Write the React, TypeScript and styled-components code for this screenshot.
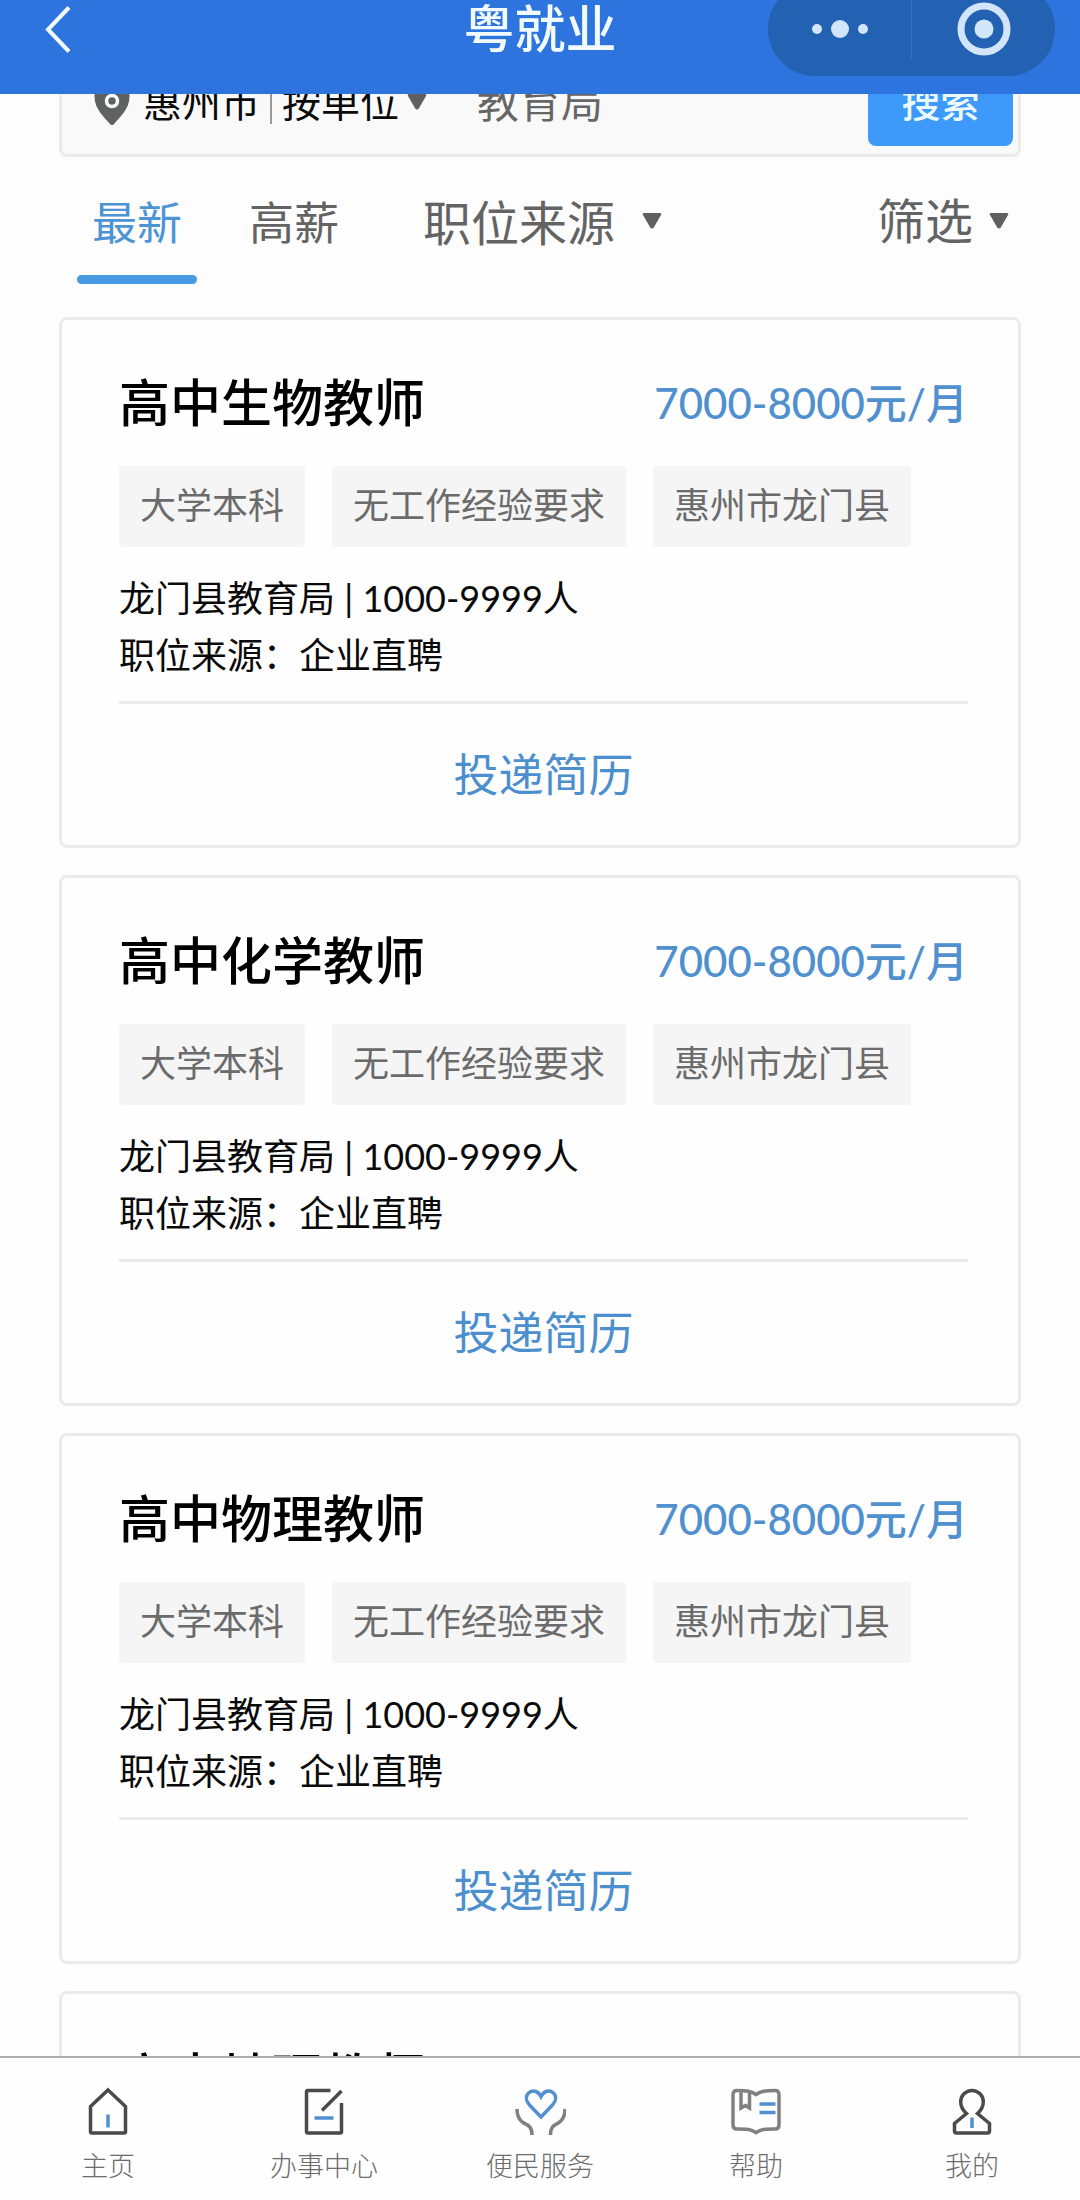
import React, { useLayoutEffect, useRef, useState } from "react";
import styled, { createGlobalStyle } from "styled-components";

const GlobalStyle = createGlobalStyle`
  * { box-sizing: border-box; }
  body {
    margin: 0;
    background: #fdfdfd;
    font-family: Lato, "Noto Sans CJK SC", sans-serif;
    color: #0a0a0a;
  }
  button, input, select {
    font: inherit;
    color: inherit;
    margin: 0;
    padding: 0;
    border: 0;
    background: none;
    appearance: none;
    outline: none;
  }
  button { cursor: pointer; }
  h1, h2, p, ul { margin: 0; padding: 0; }
  ul { list-style: none; }
`;

const Screen = styled.div`
  display: flex;
  flex-direction: column;
  height: 100vh;
  overflow: hidden;
`;

const Header = styled.header`
  flex: none;
  overflow: hidden;
  padding-bottom: 18px;
  background: #2d74de;
`;

const HeaderBar = styled.div`
  display: grid;
  grid-template-columns: 1fr auto 1fr;
  align-items: center;
  height: 94px;
  margin-top: -18px;
  padding: 0 25px 0 40px;
  color: #f2fbff;
`;

const BackButton = styled.button`
  justify-self: start;
  display: flex;
`;

const AppTitle = styled.h1`
  padding-right: 15px;
  font-size: 51px;
  line-height: 60px;
  font-weight: 500;
`;

const Capsule = styled.div`
  justify-self: end;
  display: flex;
  align-items: center;
  width: 287px;
  height: 94px;
  border-radius: 47px;
  background: #2361b3;
  color: #d3e5fb;
`;

const CapsuleButton = styled.button`
  flex: 1;
  display: flex;
  justify-content: center;
  & + & { border-left: 1px solid #3270c3; }
  height: 62px;
  align-items: center;
`;

const Scroller = styled.main`
  flex: 1;
  min-height: 0;
  overflow-y: auto;
  scrollbar-width: none;
  padding: 24px 59px 27px;
`;

const SearchBar = styled.form`
  display: flex;
  align-items: center;
  height: 110px;
  padding: 0 5px 0 32px;
  border: 3px solid #ebebeb;
  border-radius: 8px;
  background: #f9f9f9;
  font-size: 39px;
  line-height: 46px;
`;

const CityButton = styled.button`
  display: flex;
  align-items: center;
  gap: 13px;
`;

const Divider = styled.span`
  width: 2px;
  height: 44px;
  margin: 0 10px;
  background: #999;
`;

const SelectWrap = styled.label<{ $gap: number }>`
  display: flex;
  align-items: center;
  gap: ${(p) => p.$gap}px;
`;

const Keyword = styled.input`
  flex: 1;
  min-width: 0;
  padding-left: 50px;
  color: #666;
  font-size: 42px;
`;

const SearchButton = styled.button`
  width: 145px;
  height: 87px;
  border-radius: 8px;
  background: #3d9afb;
  color: #ecfaff;
  font-weight: 500;
`;

const Filters = styled.nav`
  display: flex;
  align-items: flex-start;
  margin: 21px 0 33px;
  padding: 0 12px 0 18px;
  color: #636363;
  font-size: 48px;
  line-height: 90px;
`;

const Tab = styled.button<{ $active: boolean }>`
  margin-right: 37px;
  padding: 0 15px;
  font-size: 45px;
  line-height: 90px;
  color: ${(p) => (p.$active ? "#4c94d4" : "#636363")};
  &::after {
    content: "";
    display: block;
    height: 9px;
    margin: 7px -15px 0;
    border-radius: 5px;
    background: ${(p) => (p.$active ? "#4699e3" : "transparent")};
  }
`;

const SourceFilter = styled(SelectWrap)`
  height: 86px;
  margin-left: 32px;
  select { height: 86px; }
`;

const MoreFilter = styled.button`
  display: flex;
  align-items: center;
  gap: 16px;
  height: 86px;
  margin-left: auto;
`;

const JobList = styled.ul`
  display: flex;
  flex-direction: column;
  gap: 27px;
`;

const Card = styled.li`
  padding: 53px 50px 0 57px;
  border: 3px solid #ebebeb;
  border-radius: 8px;
  background: #fefefe;
`;

const CardHead = styled.div`
  display: flex;
  align-items: center;
  justify-content: space-between;
  line-height: 60px;
`;

const JobTitle = styled.h2`
  font-size: 51px;
  font-weight: 500;
  color: #000;
`;

const Salary = styled.span`
  font-size: 42px;
  font-weight: 500;
  color: #5090cf;
`;

const Tags = styled.div`
  display: flex;
  flex-wrap: wrap;
  gap: 27px;
  margin-top: 33px;
`;

const Tag = styled.span`
  padding: 0 21px 2px;
  border-radius: 3px;
  background: #f5f5f5;
  color: #6b6b6b;
  font-size: 36px;
  line-height: 79px;
`;

const Info = styled.p`
  margin: 23px 0 17px;
  font-size: 36px;
  line-height: 57px;
`;

const Apply = styled.button`
  display: block;
  width: 100%;
  height: 144px;
  padding-bottom: 5px;
  border-top: 3px solid #ebebeb;
  color: #4c8fce;
  font-size: 45px;
`;

const TabBar = styled.nav`
  flex: none;
  display: flex;
  padding: 28px 0 14px;
  border-top: 2px solid #acacac;
  background: #fefefe;
`;

const NavLink = styled.a`
  flex: 1;
  display: flex;
  flex-direction: column;
  align-items: center;
  gap: 8px;
  color: #6c6c6c;
  font-size: 27px;
  line-height: 40px;
  font-weight: 300;
  text-decoration: none;
`;

const Caret = () => (
  <svg width="20" height="16" viewBox="0 0 20 16" aria-hidden="true">
    <path d="M2 0h16q2 0 1 2l-7.200 12.500q-1.800 2-3.600 0L1 2Q0 0 2 0Z" fill="#606060" />
  </svg>
);

const Pin = () => (
  <svg width="36" height="48" viewBox="0 0 36 48" aria-hidden="true">
    <path d="M18 0C8 0 .5 8 .5 19 .5 31 11 40 15.500 45.500q2.500 3 5 0C25 40 35.500 31 35.500 19 35.500 8 28 0 18 0Z" fill="#606163" />
    <circle cx="18" cy="23" r="5.500" fill="none" stroke="#fff" strokeWidth="3.500" />
  </svg>
);

const dark = "#4a4a4a";
const grey = "#808080";
const blue = "#5290cf";

const HomeIcon = () => (
  <>
    <path d="M26 4 43.500 20.500V45.500q0 1.500-1.500 1.500H10q-1.500 0-1.500-1.500V20.500Z" stroke={dark} />
    <path d="M26 28.500V41.500" stroke={blue} />
  </>
);
const OfficeIcon = () => (
  <>
    <path d="M32.500 4.500H10q-1.500 0-1.500 1.500V45.500q0 1.500 1.500 1.500H42q1.500 0 1.500-1.500V17M43.500 5 24 24.500" stroke={dark} />
    <path d="M16.500 32H35.500" stroke={blue} />
  </>
);
const ServiceIcon = () => (
  <>
    <path d="M27 31 15.500 19C11 14 12 9.500 14.500 7 18.500 3.500 24 4.500 27 10.500 30 4.500 35.500 3.500 39.500 7 42 9.500 43 14 38.500 19Z" stroke={blue} />
    <path d="M3 23C3 30 6 34.500 9 36.500 12.500 39 18 39 18 49M51 23C51 30 48 34.500 45 36.500 41.500 39 36.500 39 36.500 49" stroke={grey} />
  </>
);
const HelpIcon = () => (
  <>
    <path d="M26 8.500C21 5 17 4.500 7 4.500Q3 4.500 3 8.500V39Q3 43 7 43C17 43 21 43 26 46.500 31 43 35 43 45 43Q49 43 49 39V8.500Q49 4.500 45 4.500C35 4.500 31 5 26 8.500ZM11 5V22L15.500 19.500 19.500 22V5.500" stroke={grey} />
    <path d="M29.500 18H45.500M29.500 26.500H45.500" stroke={blue} />
  </>
);
const MeIcon = () => (
  <>
    <path d="M20.500 27.500Q14.700 22.500 14.700 15.800A11.300 11.300 0 0 1 37.300 15.800Q37.300 22.500 31.500 27.500L43.500 37.500V45Q43.500 47 41.500 47H10.500Q8.500 47 8.500 45V37.500Z" stroke={dark} />
    <path d="M26 31.500V42" stroke={blue} />
  </>
);

const navItems = [
  { label: "主页", Icon: HomeIcon },
  { label: "办事中心", Icon: OfficeIcon },
  { label: "便民服务", Icon: ServiceIcon },
  { label: "帮助", Icon: HelpIcon },
  { label: "我的", Icon: MeIcon },
];

const jobs = ["高中生物教师", "高中化学教师", "高中物理教师", "高中地理教师"].map((title) => ({
  title,
  salary: "7000-8000元/月",
  tags: ["大学本科", "无工作经验要求", "惠州市龙门县"],
  employer: "龙门县教育局 | 1000-9999人",
  source: "职位来源：企业直聘",
}));

const INITIAL_SCROLL = 71;

export default function App() {
  const scroller = useRef<HTMLElement>(null);
  const [tab, setTab] = useState("最新");

  useLayoutEffect(() => {
    if (scroller.current) scroller.current.scrollTop = INITIAL_SCROLL;
  }, []);

  return (
    <Screen>
      <GlobalStyle />
      <Header>
        <HeaderBar>
          <BackButton aria-label="返回">
            <svg width="36" height="50" viewBox="0 0 36 50" fill="none" stroke="currentColor" strokeWidth="4">
              <path d="M29 3.500 8 25.500 29 47.500" />
            </svg>
          </BackButton>
          <AppTitle>粤就业</AppTitle>
          <Capsule>
            <CapsuleButton aria-label="更多">
              <svg width="60" height="20" viewBox="0 0 60 20" fill="currentColor">
                <circle cx="7" cy="10" r="5" />
                <circle cx="30" cy="10" r="9" />
                <circle cx="53" cy="10" r="5" />
              </svg>
            </CapsuleButton>
            <CapsuleButton aria-label="关闭">
              <svg width="54" height="54" viewBox="0 0 54 54" fill="currentColor">
                <circle cx="27" cy="27" r="23" fill="none" stroke="currentColor" strokeWidth="7" />
                <circle cx="27" cy="27" r="9.500" />
              </svg>
            </CapsuleButton>
          </Capsule>
        </HeaderBar>
      </Header>

      <Scroller ref={scroller}>
        <SearchBar onSubmit={(e) => e.preventDefault()}>
          <CityButton type="button">
            <Pin />
            惠州市
          </CityButton>
          <Divider />
          <SelectWrap $gap={7}>
            <select aria-label="搜索方式">
              <option>按单位</option>
            </select>
            <Caret />
          </SelectWrap>
          <Keyword aria-label="关键词" defaultValue="教育局" />
          <SearchButton type="submit">搜索</SearchButton>
        </SearchBar>

        <Filters>
          {["最新", "高薪"].map((name) => (
            <Tab key={name} $active={tab === name} onClick={() => setTab(name)}>
              {name}
            </Tab>
          ))}
          <SourceFilter $gap={26}>
            <select aria-label="职位来源">
              <option>职位来源</option>
            </select>
            <Caret />
          </SourceFilter>
          <MoreFilter>
            筛选
            <Caret />
          </MoreFilter>
        </Filters>

        <JobList>
          {jobs.map((job) => (
            <Card key={job.title}>
              <CardHead>
                <JobTitle>{job.title}</JobTitle>
                <Salary>{job.salary}</Salary>
              </CardHead>
              <Tags>
                {job.tags.map((tag) => (
                  <Tag key={tag}>{tag}</Tag>
                ))}
              </Tags>
              <Info>
                {job.employer}
                <br />
                {job.source}
              </Info>
              <Apply>投递简历</Apply>
            </Card>
          ))}
        </JobList>
      </Scroller>

      <TabBar>
        {navItems.map(({ label, Icon }) => (
          <NavLink key={label} href="#">
            <svg width="52" height="52" viewBox="0 0 52 52" fill="none" strokeWidth="3.500" aria-hidden="true">
              <Icon />
            </svg>
            {label}
          </NavLink>
        ))}
      </TabBar>
    </Screen>
  );
}
